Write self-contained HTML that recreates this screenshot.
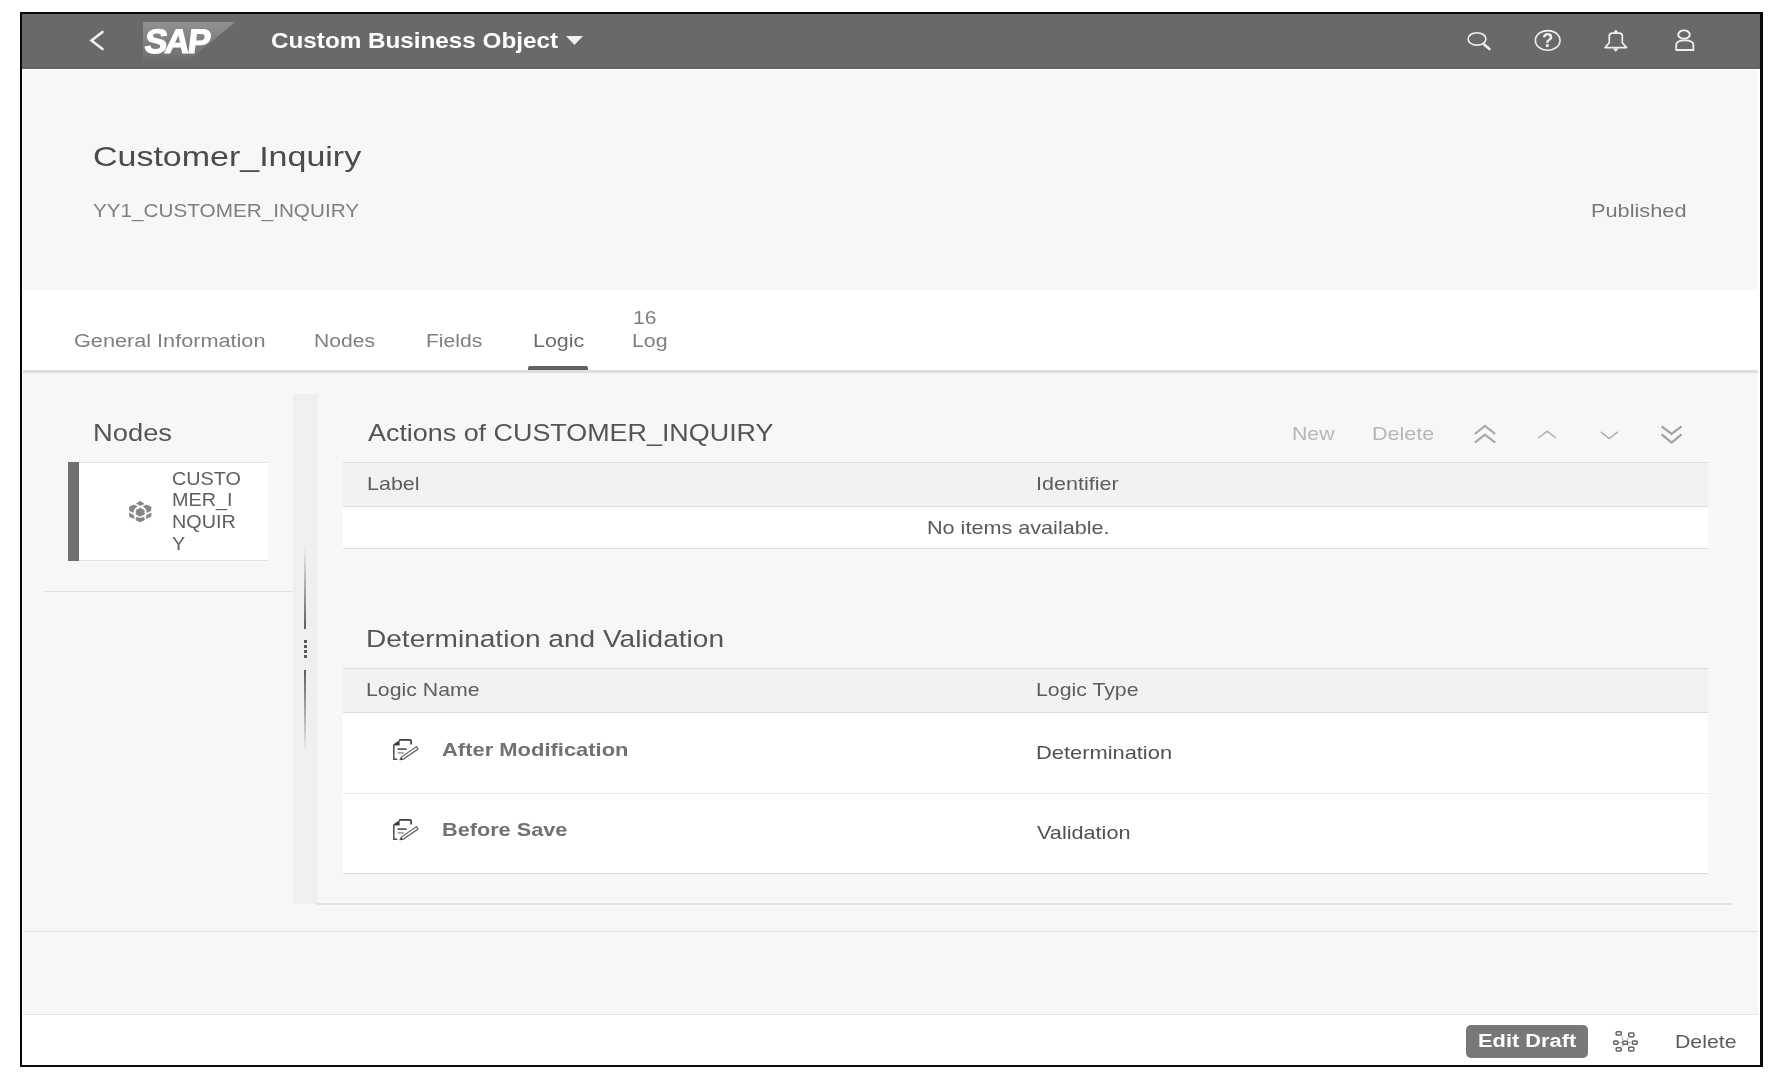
<!DOCTYPE html>
<html><head><meta charset="utf-8"><style>
html,body{margin:0;padding:0;background:#fff;width:1777px;height:1081px;overflow:hidden;}
body{font-family:"Liberation Sans",sans-serif;position:relative;}
.t{position:absolute;white-space:nowrap;transform-origin:0 0;filter:grayscale(1);}
.r{position:absolute;}
</style></head><body>
<div class="r" style="left:22px;top:14px;width:1738px;height:55px;background:#68696b;"></div>
<div class="r" style="left:23px;top:69px;width:1735px;height:221px;background:#f6f7f7;"></div>
<div class="r" style="left:22px;top:66px;width:1738px;height:3px;background:#646567;"></div>
<div class="r" style="left:22px;top:69px;width:1738px;height:1px;background:#fdfefe;"></div>
<div class="r" style="left:23px;top:290px;width:1735px;height:80px;background:#ffffff;"></div>
<div class="r" style="left:23px;top:370px;width:1735px;height:3px;background:#dcdddd;"></div>
<div class="r" style="left:23px;top:373px;width:1735px;height:641px;background:#f6f7f7;"></div>
<div class="r" style="left:23px;top:931px;width:1735px;height:1px;background:#dedfdf;"></div>
<div class="r" style="left:23px;top:1014px;width:1735px;height:1px;background:#e6e7e7;"></div>
<div class="r" style="left:23px;top:1015px;width:1735px;height:50px;background:#ffffff;"></div>
<div class="r" style="left:20px;top:12px;width:1738px;height:1051px;border:2px solid #0a0708;border-right-width:3px;"></div>
<div class="t" style="left:271.00px;top:29.68px;font-size:22px;line-height:22px;color:#ffffff;font-weight:700;transform:scaleX(1.1023);">Custom Business Object</div>
<svg class="r" style="left:565px;top:35px" width="19" height="11"><path d="M1 1 L18 1 L9.5 10 Z" fill="#f0f0f0"/></svg>
<div class="t" style="left:93.30px;top:142.80px;font-size:28px;line-height:28px;color:#4a4b4d;transform:scaleX(1.2134);">Customer_Inquiry</div>
<div class="t" style="left:93.30px;top:200.92px;font-size:19px;line-height:19px;color:#7e7f81;transform:scaleX(1.0891);">YY1_CUSTOMER_INQUIRY</div>
<div class="t" style="left:1591.20px;top:201.32px;font-size:19px;line-height:19px;color:#77787a;transform:scaleX(1.1448);">Published</div>
<div class="t" style="left:73.60px;top:332.26px;font-size:18px;line-height:18px;color:#7e7f81;transform:scaleX(1.2033);">General Information</div>
<div class="t" style="left:314.30px;top:332.26px;font-size:18px;line-height:18px;color:#7e7f81;transform:scaleX(1.1720);">Nodes</div>
<div class="t" style="left:425.80px;top:332.26px;font-size:18px;line-height:18px;color:#7e7f81;transform:scaleX(1.1701);">Fields</div>
<div class="t" style="left:532.60px;top:332.26px;font-size:18px;line-height:18px;color:#6a6b6d;transform:scaleX(1.1917);">Logic</div>
<div class="t" style="left:632.60px;top:308.76px;font-size:18px;line-height:18px;color:#7e7f81;transform:scaleX(1.1732);">16</div>
<div class="t" style="left:631.80px;top:332.26px;font-size:18px;line-height:18px;color:#7e7f81;transform:scaleX(1.1848);">Log</div>
<div class="r" style="left:528px;top:366px;width:60px;height:4px;background:#5e5f61;border-radius:2px 2px 0 0;"></div>
<div class="t" style="left:93.00px;top:421.53px;font-size:23px;line-height:23px;color:#545557;transform:scaleX(1.1880);">Nodes</div>
<div class="r" style="left:68px;top:462px;width:200px;height:99px;background:#ffffff;border-top:1px solid #e4e4e4;border-bottom:1px solid #e4e4e4;box-sizing:border-box;"></div>
<div class="r" style="left:68px;top:462px;width:11px;height:99px;background:#6f7072;"></div>
<div class="t" style="left:171.80px;top:469.76px;font-size:18px;line-height:18px;color:#5e5f61;transform:scaleX(1.1000);">CUSTO</div>
<div class="t" style="left:171.80px;top:491.36px;font-size:18px;line-height:18px;color:#5e5f61;transform:scaleX(1.1000);">MER_I</div>
<div class="t" style="left:171.80px;top:512.96px;font-size:18px;line-height:18px;color:#5e5f61;transform:scaleX(1.1000);">NQUIR</div>
<div class="t" style="left:171.80px;top:534.56px;font-size:18px;line-height:18px;color:#5e5f61;transform:scaleX(1.1000);">Y</div>
<div class="r" style="left:44px;top:591px;width:249px;height:1px;background:#dfe0e0;"></div>
<div class="r" style="left:293px;top:394px;width:25px;height:510px;background:#eeefef;"></div>
<div class="r" style="left:304px;top:547px;width:2px;height:82px;background:linear-gradient(to bottom,rgba(94,95,97,0),#5e5f61);"></div>
<div class="r" style="left:304px;top:640px;width:3px;height:3px;background:#58595b;"></div>
<div class="r" style="left:304px;top:645px;width:3px;height:3px;background:#58595b;"></div>
<div class="r" style="left:304px;top:650px;width:3px;height:3px;background:#58595b;"></div>
<div class="r" style="left:304px;top:655px;width:3px;height:3px;background:#58595b;"></div>
<div class="r" style="left:304px;top:670px;width:2px;height:82px;background:linear-gradient(to top,rgba(94,95,97,0),#5e5f61);"></div>
<div class="r" style="left:317px;top:903px;width:1416px;height:2px;background:#e2e3e3;"></div>
<div class="t" style="left:368.00px;top:421.26px;font-size:24.5px;line-height:24.5px;color:#545557;transform:scaleX(1.0976);">Actions of CUSTOMER_INQUIRY</div>
<div class="t" style="left:1292.00px;top:424.12px;font-size:19px;line-height:19px;color:#b5b6b8;transform:scaleX(1.1184);">New</div>
<div class="t" style="left:1371.50px;top:424.12px;font-size:19px;line-height:19px;color:#b5b6b8;transform:scaleX(1.1347);">Delete</div>
<div class="r" style="left:343px;top:462px;width:1365px;height:1px;background:#dcdddd;"></div>
<div class="r" style="left:343px;top:463px;width:1365px;height:43px;background:#f2f2f2;"></div>
<div class="r" style="left:343px;top:506px;width:1365px;height:1px;background:#dcdddd;"></div>
<div class="r" style="left:343px;top:507px;width:1365px;height:41px;background:#ffffff;"></div>
<div class="r" style="left:343px;top:548px;width:1365px;height:1px;background:#dcdddd;"></div>
<div class="t" style="left:366.50px;top:473.52px;font-size:19px;line-height:19px;color:#5c5d5f;transform:scaleX(1.1298);">Label</div>
<div class="t" style="left:1036.40px;top:473.52px;font-size:19px;line-height:19px;color:#5c5d5f;transform:scaleX(1.1337);">Identifier</div>
<div class="t" style="left:927.00px;top:517.92px;font-size:19px;line-height:19px;color:#58595b;transform:scaleX(1.1372);">No items available.</div>
<div class="t" style="left:366.00px;top:627.26px;font-size:24.5px;line-height:24.5px;color:#545557;transform:scaleX(1.1446);">Determination and Validation</div>
<div class="r" style="left:343px;top:668px;width:1365px;height:1px;background:#dcdddd;"></div>
<div class="r" style="left:343px;top:669px;width:1365px;height:43px;background:#f2f2f2;"></div>
<div class="r" style="left:343px;top:712px;width:1365px;height:1px;background:#dcdddd;"></div>
<div class="r" style="left:343px;top:713px;width:1365px;height:160px;background:#ffffff;"></div>
<div class="r" style="left:343px;top:793px;width:1365px;height:1px;background:#ececec;"></div>
<div class="r" style="left:343px;top:873px;width:1365px;height:1px;background:#dcdddd;"></div>
<div class="t" style="left:366.20px;top:679.52px;font-size:19px;line-height:19px;color:#5c5d5f;transform:scaleX(1.1198);">Logic Name</div>
<div class="t" style="left:1035.70px;top:679.52px;font-size:19px;line-height:19px;color:#5c5d5f;transform:scaleX(1.1198);">Logic Type</div>
<div class="t" style="left:441.50px;top:740.22px;font-size:19px;line-height:19px;color:#707173;font-weight:700;transform:scaleX(1.1548);">After Modification</div>
<div class="t" style="left:441.50px;top:820.22px;font-size:19px;line-height:19px;color:#707173;font-weight:700;transform:scaleX(1.1410);">Before Save</div>
<div class="t" style="left:1035.70px;top:743.42px;font-size:19px;line-height:19px;color:#505153;transform:scaleX(1.1501);">Determination</div>
<div class="t" style="left:1037.00px;top:823.42px;font-size:19px;line-height:19px;color:#505153;transform:scaleX(1.1400);">Validation</div>
<div class="r" style="left:1466px;top:1025px;width:122px;height:33px;background:#77787a;border-radius:5px;"></div>
<div class="t" style="left:1477.50px;top:1032.46px;font-size:18px;line-height:18px;color:#ffffff;font-weight:700;transform:scaleX(1.2133);">Edit Draft</div>
<div class="t" style="left:1674.80px;top:1031.82px;font-size:19px;line-height:19px;color:#5a5b5d;transform:scaleX(1.1201);">Delete</div>
<svg class="r" style="left:0;top:0" width="1777" height="1081" viewBox="0 0 1777 1081"><path d="M102.5 32 L91.5 40.5 L102.5 49" fill="none" stroke="#f2f2f2" stroke-width="2.6" stroke-linecap="round" stroke-linejoin="miter"/><defs><linearGradient id="sapg" x1="0" y1="0" x2="0" y2="1"><stop offset="0" stop-color="#909193"/><stop offset="1" stop-color="#6e6f71"/></linearGradient></defs><path d="M143 22 L235 22 L190 60 L143 60 Z" fill="url(#sapg)"/><ellipse cx="1477" cy="38.9" rx="8.9" ry="6.2" fill="none" stroke="#f0f0f0" stroke-width="1.6"/><path d="M1483.5 44 L1489.5 49" stroke="#f0f0f0" stroke-width="2.6" stroke-linecap="round"/><ellipse cx="1547.7" cy="40.4" rx="12.3" ry="9.8" fill="none" stroke="#f0f0f0" stroke-width="1.6"/><path d="M1605 47.6 L1609.3 42.8 L1609.3 35.8 Q1609.3 33.4 1612.3 33.2 L1619.3 33.2 Q1622.3 33.4 1622.3 35.8 L1622.3 42.8 L1626.6 47.6 Z" fill="none" stroke="#f0f0f0" stroke-width="1.7" stroke-linejoin="round"/><path d="M1612.8 48.4 L1618.7 48.4 L1615.8 51.8 Z" fill="#f0f0f0"/><circle cx="1615.8" cy="31.6" r="1.5" fill="#f0f0f0"/><ellipse cx="1684.0" cy="34.6" rx="5.8" ry="4.2" fill="none" stroke="#f0f0f0" stroke-width="1.9"/><path d="M1676.2 50 L1676.2 45 Q1676.2 40.4 1684.8 40.4 Q1693.4 40.4 1693.4 45 L1693.4 50 Z" fill="none" stroke="#f0f0f0" stroke-width="1.8" stroke-linejoin="round"/><path d="M1474.8 434 L1485 425.8 L1495.2 434 M1474.8 442.6 L1485 434.6 L1495.2 442.6" fill="none" stroke="#a6a7a9" stroke-width="2.2"/><path d="M1538.3 438 L1547.2 431.3 L1556.1 438" fill="none" stroke="#aeafb1" stroke-width="1.5"/><path d="M1600.8 431.8 L1609.1 438.6 L1618 431.8" fill="none" stroke="#aeafb1" stroke-width="1.5"/><path d="M1661.6 426.3 L1671.6 433.8 L1681.6 426.3 M1661.6 434.4 L1671.6 442.6 L1681.6 434.4" fill="none" stroke="#a0a1a3" stroke-width="2.2"/></svg>
<div class="t" style="left:146.50px;top:24.02px;font-size:34px;line-height:34px;color:#ffffff;font-weight:700;transform:scaleX(0.9729);letter-spacing:-2px;-webkit-text-stroke:1.2px #fff;transform:scaleX(1.0) skewX(-7deg);">SAP</div>
<div class="t" style="left:1541.50px;top:30.25px;font-size:20.5px;line-height:20.5px;color:#f0f0f0;font-weight:700;transform:scaleX(0.9029);">?</div>
<svg class="r" style="left:129px;top:501px" width="23" height="22" viewBox="0 0 23 22"><g fill="#85868a" stroke="#85868a" stroke-width="0.7" stroke-linejoin="round"><path d="M7.5 2.6 L11.2 0.3 L15 2.9 L11.2 4.4 Z"/><path d="M0.5 5.8 L5.06 4 L8.2 5.4 L5.06 7.9 L4.36 11.4 L0.5 9.6 Z"/><path d="M21.9 5.8 L17.34 4 L14.2 5.4 L17.34 7.9 L18.04 11.4 L21.9 9.6 Z"/><path d="M7.2 9.3 L11.2 7 L15.2 9.3 L15.2 13.5 L11.2 15.25 L7.2 13.5 Z"/><path d="M0.3 12.1 L4.7 14.2 L5.06 17.4 L0.5 15.6 Z"/><path d="M22.1 12.1 L17.7 14.2 L17.34 17.4 L21.9 15.6 Z"/><path d="M7.2 16.3 L11.2 17.2 L15.2 16.3 L15.2 19.1 L11.2 20.9 L7.2 19.1 Z"/></g></svg>
<svg class="r" style="left:385px;top:732px" width="40" height="34" viewBox="0 0 40 34"><path d="M14.8 7.9 L24.8 7.9 Q26.1 7.9 26.1 9.2 L26.1 11.8" fill="none" stroke="#3e3f41" stroke-width="1.7" stroke-linecap="round"/><path d="M8.2 12.6 L14.6 7.9 L14.6 13.4 L8.2 13.4 Z" fill="#3e3f41"/><path d="M8.8 13.2 L8.8 27.3 L12.3 27.3" fill="none" stroke="#55565a" stroke-width="1.6"/><path d="M12.6 17.1 L21.7 17.1" stroke="#3e3f41" stroke-width="1.5"/><path d="M12.6 20.9 L18.6 20.9" stroke="#909195" stroke-width="1.4"/><path d="M15 27.8 L16.7 24.9 L31.4 14.6 L33.1 17.0 L18.3 27.3 Z" fill="none" stroke="#55565a" stroke-width="1.15" stroke-linejoin="round"/><path d="M15 27.8 L16.2 25.2 L18 27 Z" fill="#3e3f41"/></svg>
<svg class="r" style="left:385px;top:812px" width="40" height="34" viewBox="0 0 40 34"><path d="M14.8 7.9 L24.8 7.9 Q26.1 7.9 26.1 9.2 L26.1 11.8" fill="none" stroke="#3e3f41" stroke-width="1.7" stroke-linecap="round"/><path d="M8.2 12.6 L14.6 7.9 L14.6 13.4 L8.2 13.4 Z" fill="#3e3f41"/><path d="M8.8 13.2 L8.8 27.3 L12.3 27.3" fill="none" stroke="#55565a" stroke-width="1.6"/><path d="M12.6 17.1 L21.7 17.1" stroke="#3e3f41" stroke-width="1.5"/><path d="M12.6 20.9 L18.6 20.9" stroke="#909195" stroke-width="1.4"/><path d="M15 27.8 L16.7 24.9 L31.4 14.6 L33.1 17.0 L18.3 27.3 Z" fill="none" stroke="#55565a" stroke-width="1.15" stroke-linejoin="round"/><path d="M15 27.8 L16.2 25.2 L18 27 Z" fill="#3e3f41"/></svg>
<svg class="r" style="left:1605px;top:1024px" width="40" height="34" viewBox="0 0 40 34"><rect x="11.15" y="7.85" width="5.1" height="3.200000000000001" rx="0.9" fill="none" stroke="#626365" stroke-width="1.5"/><rect x="23.75" y="9.05" width="5.100000000000001" height="3.6999999999999993" rx="0.9" fill="none" stroke="#626365" stroke-width="1.5"/><rect x="8.65" y="16.95" width="4.4" height="3.1999999999999993" rx="0.9" fill="none" stroke="#626365" stroke-width="1.5"/><rect x="17.85" y="17.15" width="4.799999999999997" height="3.200000000000003" rx="0.9" fill="none" stroke="#626365" stroke-width="1.5"/><rect x="27.45" y="16.95" width="4.699999999999999" height="3.1999999999999993" rx="0.9" fill="none" stroke="#626365" stroke-width="1.5"/><rect x="11.15" y="23.75" width="5.1" height="3.1999999999999993" rx="0.9" fill="none" stroke="#626365" stroke-width="1.5"/><rect x="23.75" y="23.35" width="5.100000000000001" height="3.599999999999998" rx="0.9" fill="none" stroke="#626365" stroke-width="1.5"/><path d="M13.8 18.6 L17.1 18.6 M23.4 18.6 L26.7 18.6 M16.8 11.8 L18 16.4 M23 13.5 L22.8 16.4 M17 23 L18.5 21.1 M23 21.1 L23.5 22.6" stroke="#a5a6a8" stroke-width="1"/></svg>
</body></html>
